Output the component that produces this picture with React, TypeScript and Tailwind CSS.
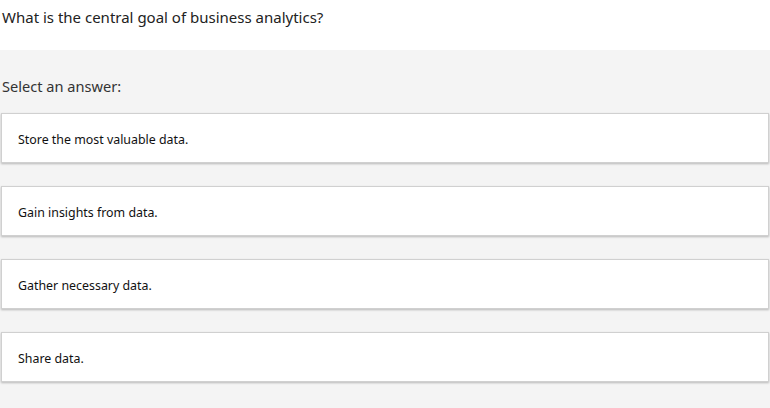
const ANSWERS = [
  'Store the most valuable data.',
  'Gain insights from data.',
  'Gather necessary data.',
  'Share data.',
] as const;

export default function App() {
  return (
    <div
      className="min-h-[408px] w-[770px] bg-[#f4f4f4] text-[#222]"
      style={{ fontFamily: '"Segoe UI", "Noto Sans", sans-serif' }}
    >
      <div className="h-[50px] bg-white px-[2px] pt-[6px]">
        <h1 className="text-[15px] leading-[22px]">What is the central goal of business analytics?</h1>
      </div>
      <div className="pt-[25px]">
        <p className="px-[2px] text-[14.6px] leading-[22px] text-[#333]">Select an answer:</p>
        <div className="mt-[16px] flex flex-col gap-[23px] px-[1px]">
          {ANSWERS.map((answer) => (
            <button
              key={answer}
              className="flex h-[50px] w-full items-center border border-[#d0d0d0] bg-white pl-[16px] pt-[5px] text-left text-[12.4px] text-[#111] shadow-[0_1px_2px_rgba(0,0,0,0.25)]"
            >
              {answer}
            </button>
          ))}
        </div>
      </div>
    </div>
  );
}
